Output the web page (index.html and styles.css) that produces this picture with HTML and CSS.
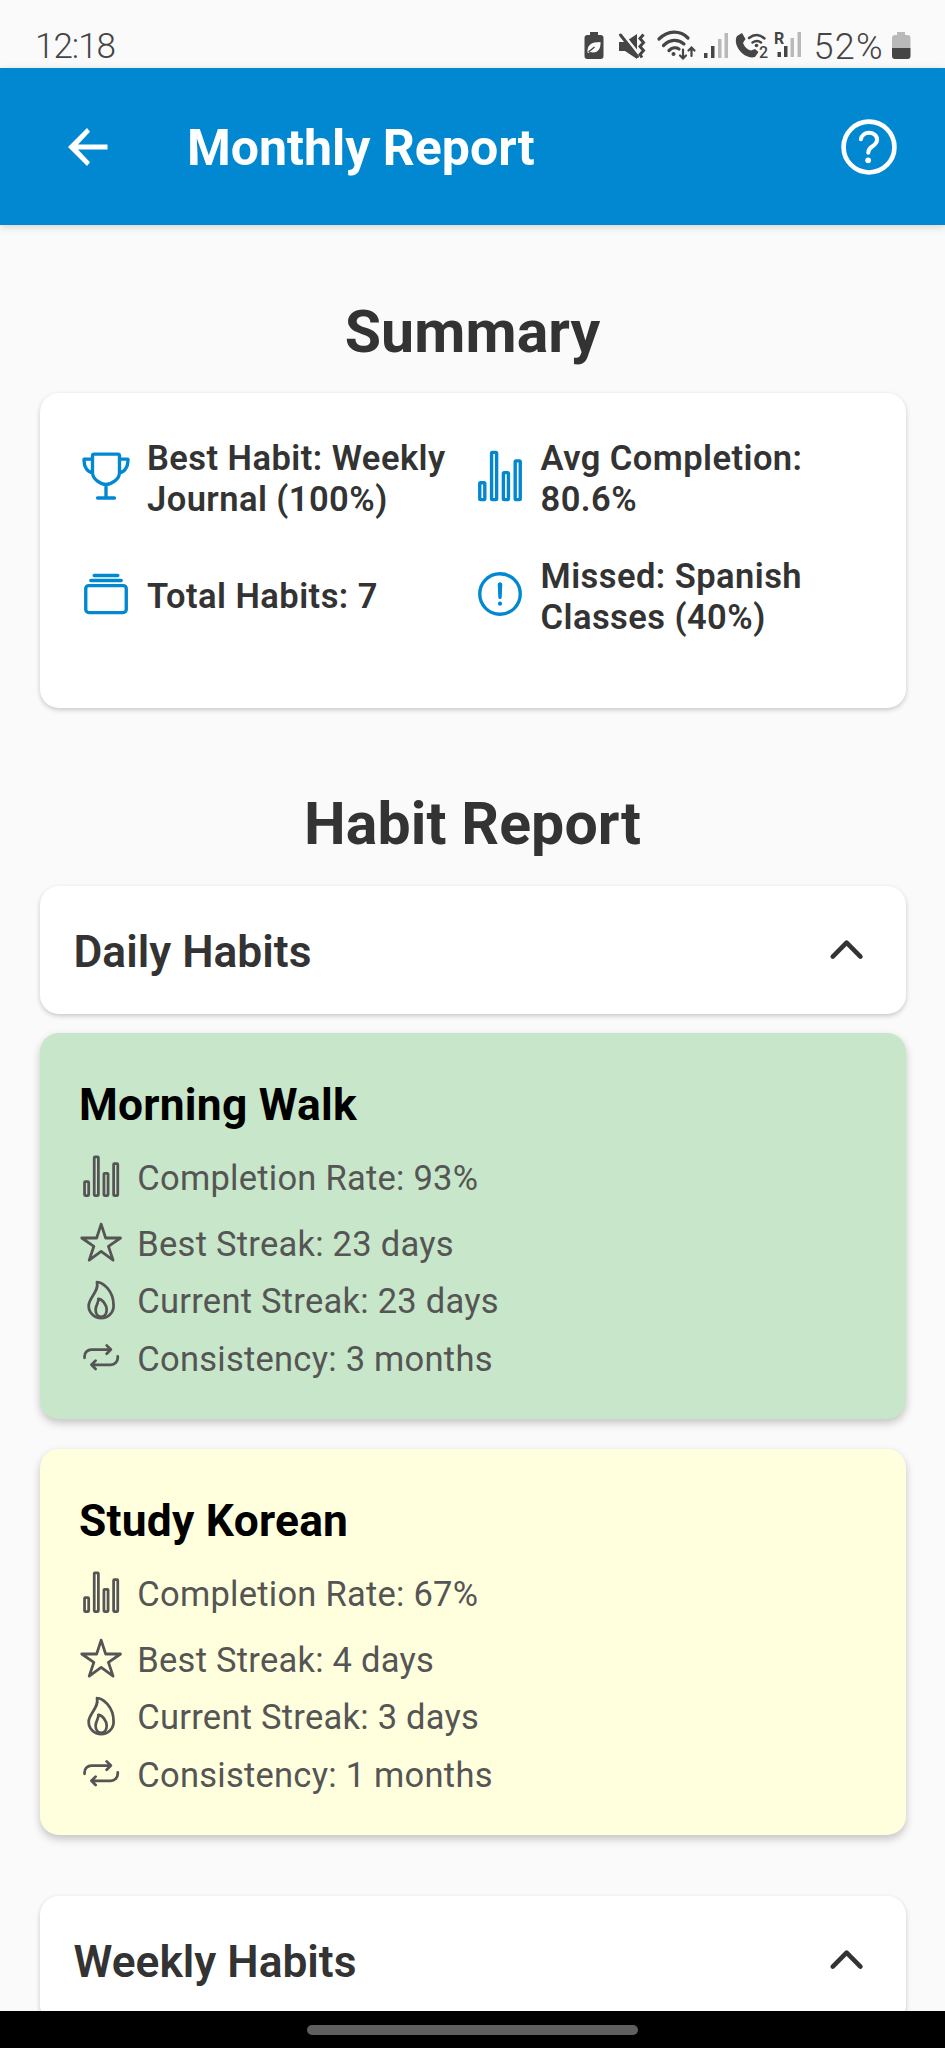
FILE: index.html
```
<!DOCTYPE html>
<html lang="en">
<head>
<meta charset="utf-8">
<title>Monthly Report</title>
<link rel="stylesheet" href="styles.css">
</head>
<body>
<svg class="defs" width="0" height="0" aria-hidden="true">
  <symbol id="stats" viewBox="0 0 512 512"><rect x="64" y="320" width="48" height="160" rx="8"/><rect x="288" y="224" width="48" height="256" rx="8"/><rect x="400" y="112" width="48" height="368" rx="8"/><rect x="176" y="32" width="48" height="448" rx="8"/></symbol>
  <symbol id="trophy" viewBox="0 0 512 512"><path d="M176 464h160M256 336v128M384 224c0-50.64-.08-134.63-.12-160a16 16 0 00-16-16l-223.79.26a16 16 0 00-16 15.95c0 30.58-.13 129.17-.13 159.79 0 64.28 83 112 128 112S384 288.26 384 224zM128 96H48v16c0 55.22 33.55 112 80 112M384 96h80v16c0 55.22-33.55 112-80 112"/></symbol>
  <symbol id="albums" viewBox="0 0 512 512"><rect x="64" y="176" width="384" height="256" rx="28.87"/><path d="M144 80h224M112 128h288"/></symbol>
  <symbol id="alert" viewBox="0 0 512 512"><circle cx="256" cy="256" r="192"/><path d="M250.26 166.05L256 288l5.73-121.95a5.74 5.74 0 00-5.79-6 5.74 5.74 0 00-5.68 6z"/><circle cx="256" cy="348" r="20" fill="currentColor" stroke="none"/></symbol>
  <symbol id="star" viewBox="0 0 512 512"><path d="M480 208H308L256 48l-52 160H32l140 96-54 160 138-100 138 100-54-160z"/></symbol>
  <symbol id="flame" viewBox="0 0 512 512"><path d="M112 320c0-93 124-165 96-272 66 0 192 96 192 272a144 144 0 01-288 0z"/><path d="M320 368c0 57.71-32 80-64 80s-64-22.29-64-80 40-86 32-128c42 0 96 70.29 96 128z"/></symbol>
  <symbol id="repeat" viewBox="0 0 512 512"><path d="M320 120l48 48-48 48M352 168H144a80.24 80.24 0 00-80 80v16M192 392l-48-48 48-48M160 344h208a80.24 80.24 0 0080-80v-16"/></symbol>
  <symbol id="chevron" viewBox="0 0 512 512"><path d="M112 328l144-144 144 144" stroke-width="48"/></symbol>
  <symbol id="help" viewBox="0 0 512 512"><circle cx="256" cy="256" r="176"/><path d="M200 202.29s.84-17.5 19.57-32.57C230.68 160.77 244 158.18 256 158c10.93-.14 20.69 1.67 26.53 4.45 10 4.76 29.47 16.38 29.47 41.09 0 26-17 37.81-36.37 50.8S251 281.43 251 296" stroke-width="28"/><circle cx="250" cy="348" r="20" fill="currentColor" stroke="none"/></symbol>
</svg>

<div class="screen">
  <div class="status">
    <span class="clock">12:18</span>
    <div class="indicators">
      <svg class="saver" width="20" height="28" viewBox="0 0 20 28"><path d="M6 0h8v3h2.500a3 3 0 013 3v18a3 3 0 01-3 3h-13a3 3 0 01-3-3V6a3 3 0 013-3H6z" fill="#454545"/><path d="M3.500 20.500C3 13 7 10 16.500 10c.5 7-3 12-10.500 10l-1.500 1z" fill="#fafafa"/><path d="M4.500 20l6-5" stroke="#454545" stroke-width="1.400"/></svg>
      <svg class="mute" width="28" height="28" viewBox="0 0 28 28"><path d="M1 9h6L19 1v25L7 18H1z" fill="#454545"/><path d="M3 -1l20 25" stroke="#fafafa" stroke-width="3"/><path d="M2.500 2l17 21.500" stroke="#454545" stroke-width="3" stroke-linecap="round"/><path d="M25.500 1.500l-3.500 4 3.500 4-3.500 4 3.500 4-3.500 4 2 3" fill="none" stroke="#454545" stroke-width="3"/></svg>
      <svg class="wifi" width="40" height="30" viewBox="0 0 40 30" fill="none" stroke="#454545" stroke-width="3.200" stroke-linecap="round"><path d="M2 8C11-1 23-1 31 7M6.500 14.500C13 8 21 8 27 13M12 19.500c3-3 7-3.500 10-1.500"/><circle cx="16.500" cy="23" r="2" fill="#454545" stroke="none"/><path d="M26 18.500V27M23 24.500l3 3 3-3M34.500 25v-8M31.500 19.500l3-3 3 3" stroke-width="2.200"/></svg>
      <svg class="signal" width="25" height="26" viewBox="0 0 25 26"><path d="M0 20h3.500v5H0zM7 13h3.500v12H7z" fill="#454545"/><path d="M14 6h3.500v19H14zM20.500 0H24v25h-3.500z" fill="#b9b9b9"/></svg>
      <svg class="call" width="34" height="28" viewBox="0 0 34 28"><path d="M1 4l5-3 3.500 6-2.500 4c2 4.500 4 6.500 8 7.500l4-1.500 3.500 3-3.500 5C8 28-4 13 1 4z" fill="#454545"/><path d="M13 6c5-4 10.500-4 15.500.5M16.500 10.500c3-2 6-2 8.500 0" fill="none" stroke="#454545" stroke-width="2.400" stroke-linecap="round"/><circle cx="20.500" cy="13.500" r="1.800" fill="#454545"/><text x="23" y="26" font-size="16" class="glyph">2</text></svg>
      <svg class="roam" width="28" height="28" viewBox="0 0 28 28"><text x="0" y="13" font-size="16" class="glyph heavy">R</text><path d="M3.500 21H7v5H3.500zM10 15h3.500v11H10z" fill="#454545"/><path d="M16.500 7H20v19h-3.500zM23.500 1H27v25h-3.500z" fill="#b9b9b9"/></svg>
      <span class="percent">52%</span>
      <svg class="battery" width="19" height="28" viewBox="0 0 19 28"><path d="M5 0h8v3h2.500a3 3 0 013 3v10H0V6a3 3 0 013-3h2z" fill="#b9b9b9"/><path d="M0 16h18.500v8a3 3 0 01-3 3H3a3 3 0 01-3-3z" fill="#454545"/></svg>
    </div>
  </div>

  <header class="appbar">
    <svg class="back" width="40" height="40" viewBox="0 0 40 40"><path d="M39.500 17.500v5H10L22 35.300 19 39 0 20 19 1l3 3.700L10 17.500z" fill="#fff"/></svg>
    <h1 class="title">Monthly Report</h1>
    <svg class="icon help"><use href="#help"/></svg>
  </header>

  <main class="content">
    <h2 class="heading">Summary</h2>
    <section class="card summary">
      <div class="stat"><svg class="icon"><use href="#trophy"/></svg><span>Best Habit: Weekly Journal (100%)</span></div>
      <div class="stat"><svg class="icon"><use href="#stats"/></svg><span>Avg Completion: 80.6%</span></div>
      <div class="stat"><svg class="icon"><use href="#albums"/></svg><span>Total Habits: 7</span></div>
      <div class="stat"><svg class="icon"><use href="#alert"/></svg><span>Missed: Spanish Classes (40%)</span></div>
    </section>

    <h2 class="heading report">Habit Report</h2>
    <div class="card group"><span>Daily Habits</span><svg class="icon"><use href="#chevron"/></svg></div>

    <article class="card habit good">
      <h3>Morning Walk</h3>
      <div class="row first"><svg class="icon"><use href="#stats"/></svg><span>Completion Rate: 93%</span></div>
      <div class="row"><svg class="icon"><use href="#star"/></svg><span>Best Streak: 23 days</span></div>
      <div class="row"><svg class="icon"><use href="#flame"/></svg><span>Current Streak: 23 days</span></div>
      <div class="row"><svg class="icon"><use href="#repeat"/></svg><span>Consistency: 3 months</span></div>
    </article>
    <article class="card habit fair">
      <h3>Study Korean</h3>
      <div class="row first"><svg class="icon"><use href="#stats"/></svg><span>Completion Rate: 67%</span></div>
      <div class="row"><svg class="icon"><use href="#star"/></svg><span>Best Streak: 4 days</span></div>
      <div class="row"><svg class="icon"><use href="#flame"/></svg><span>Current Streak: 3 days</span></div>
      <div class="row"><svg class="icon"><use href="#repeat"/></svg><span>Consistency: 1 months</span></div>
    </article>

    <div class="card group weekly"><span>Weekly Habits</span><svg class="icon"><use href="#chevron"/></svg></div>
  </main>

  <div class="navbar"><div class="handle"></div></div>
</div>
</body>
</html>
```

FILE: styles.css
```
* { box-sizing: border-box; }
body { margin: 0; background: #fafafa; font-family: Roboto, "Liberation Sans", sans-serif; color: #333; }
h1, h2, h3 { margin: 0; }
svg { display: block; flex: none; overflow: visible; }
.defs { position: absolute; }
.screen { width: 945px; height: 2048px; display: flex; flex-direction: column; overflow: hidden; }

.status { flex: none; height: 67.5px; padding: 25px 34.500px 0 35px; display: flex; justify-content: space-between; color: #454545; font-size: 35px; line-height: 42px; font-weight: 350; }
.clock { letter-spacing: -1px; padding-top: 1px; }
.indicators { display: flex; padding-top: 7px; }
.mute { margin-left: 13.500px; margin-top: 1px; }
.wifi { margin-left: 11px; margin-top: -1px; }
.signal { margin-left: 7px; margin-top: 1px; }
.call { margin-left: 7px; }
.roam { margin-left: 4px; margin-top: -1px; }
.percent { margin: -6px 6px 0 12px; width: 72px; font-size: 36px; letter-spacing: 1.3px; white-space: nowrap; }
.glyph { font-family: Roboto, sans-serif; font-weight: 500; fill: #454545; }
.heavy { font-weight: 700; }

.appbar { flex: none; height: 157.5px; background: #0288d1; padding: 1px 39.500px 0 68px; display: flex; align-items: center; color: #fff; box-shadow: 0 2px 8px rgba(0,0,0,.16); position: relative; }
.title { flex: 1; margin-left: 79px; padding-top: 3px; font-size: 50px; line-height: 60px; font-weight: 700; }

.icon { fill: none; stroke: currentColor; stroke-width: 32; stroke-linecap: round; stroke-linejoin: round; width: 44.300px; height: 44.300px; }
.appbar .help { width: 74px; height: 74px; }

.content { flex: 1; min-height: 0; overflow: hidden; padding: 72px 39.500px 0; }
.heading { text-align: center; font-size: 59px; line-height: 70px; font-weight: 700; margin-bottom: 26px; letter-spacing: 0.1px; }
.report { margin-bottom: 27px; }
.card { background: #fff; border-radius: 19px; box-shadow: 0 2px 5px rgba(0,0,0,.2); }

.summary { height: 315px; padding: 44.500px 39.500px 0; display: grid; grid-template-columns: 393.500px 393.500px; grid-auto-rows: 82px; row-gap: 36px; margin-bottom: 81px; }
.stat { display: flex; align-items: center; gap: 14px; font-size: 34.500px; line-height: 41px; font-weight: 600; letter-spacing: 0.45px; }
.stat .icon { width: 54px; height: 54px; color: #0288d1; margin-bottom: 5px; }

.group { height: 128px; padding: 0 34px; display: flex; align-items: center; justify-content: space-between; font-size: 44.300px; line-height: 52px; font-weight: 600; }
.group span { padding-top: 4px; }
.group .icon { width: 49.200px; height: 49.200px; }

.habit { height: 386px; padding: 45.300px 39.500px 0; margin-top: 19.300px; box-shadow: 0 4px 8px rgba(0,0,0,.22); }
.habit h3 { color: #000; font-size: 44.300px; line-height: 52px; font-weight: 700; letter-spacing: 0.25px; }
.good { background: #c8e6c9; }
.fair { background: #ffffdd; margin-top: 30px; }
.row { display: flex; align-items: center; gap: 14px; height: 45px; margin-top: 12.300px; font-size: 34.500px; line-height: 45px; color: #555; letter-spacing: 0.25px; }
.row.first { margin-top: 25px; margin-bottom: 21.500px; }
.row.first + .row { margin-top: 0; }
.row .icon { margin-bottom: 4px; }
.weekly { margin-top: 60.500px; }

.navbar { flex: none; height: 36.700px; background: #000; display: flex; justify-content: center; padding-top: 13.700px; position: relative; }
.handle { width: 331px; height: 10px; border-radius: 5px; background: #5f5f5f; }
```
